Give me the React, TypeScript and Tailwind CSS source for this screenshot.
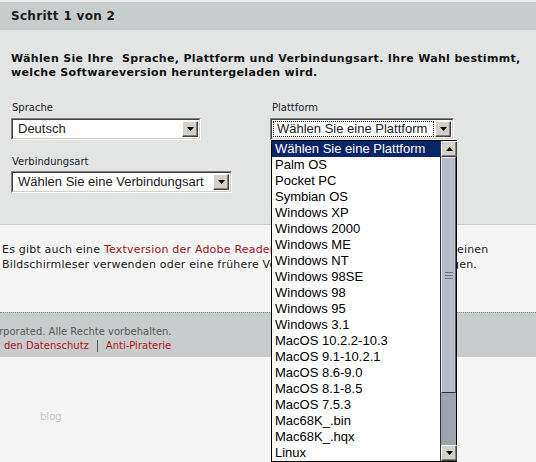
import type { ReactNode } from "react";

const platforms = [
  "Wählen Sie eine Plattform",
  "Palm OS",
  "Pocket PC",
  "Symbian OS",
  "Windows XP",
  "Windows 2000",
  "Windows ME",
  "Windows NT",
  "Windows 98SE",
  "Windows 98",
  "Windows 95",
  "Windows 3.1",
  "MacOS 10.2.2-10.3",
  "MacOS 9.1-10.2.1",
  "MacOS 8.6-9.0",
  "MacOS 8.1-8.5",
  "MacOS 7.5.3",
  "Mac68K_.bin",
  "Mac68K_.hqx",
  "Linux",
];

function Triangle({ up }: { up?: boolean }) {
  return (
    <svg width="7" height="4" viewBox="0 0 7 4">
      <path d={up ? "M3.5 0L7 4H0z" : "M0 0h7L3.5 4z"} fill="#000" />
    </svg>
  );
}

function ArrowButton({ up, className = "" }: { up?: boolean; className?: string }) {
  return (
    <div
      className={`flex h-[16px] w-[16px] shrink-0 items-center justify-center border border-t-white border-l-white border-r-[#404040] border-b-[#404040] bg-[#d4d0c8] shadow-[inset_-1px_-1px_0_#808080] ${className}`}
    >
      <Triangle up={up} />
    </div>
  );
}

function Select({ value, className, focused, children }: { value: string; className: string; focused?: boolean; children?: ReactNode }) {
  return (
    <div className={`relative h-[22px] border border-t-[#808080] border-l-[#808080] border-r-white border-b-white ${className}`}>
      <div className="flex h-full w-full items-center border border-t-[#404040] border-l-[#404040] border-r-[#d4d0c8] border-b-[#d4d0c8] bg-white pl-[1px] pr-[1px]">
        <div className={`flex h-[16px] flex-1 items-center whitespace-nowrap pl-[3px] ${focused ? "border border-dotted border-black" : "border border-transparent"}`}>
          {value}
        </div>
        <ArrowButton className="ml-[1px]" />
      </div>
      {children}
    </div>
  );
}

function PlatformList() {
  return (
    <div className="absolute left-[0px] top-[21px] z-10 flex w-[186px] border border-black bg-white">
      <ul className="flex-1">
        {platforms.map((p, i) => (
          <li
            key={p}
            className={`h-[16px] whitespace-nowrap pl-[3px] leading-[16px] ${i === 0 ? "bg-[#0a246a] text-white" : "text-black"}`}
          >
            {p}
          </li>
        ))}
      </ul>
      <div className="flex w-[16px] flex-col border-l border-[#303030]">
        <ArrowButton up className="bg-[#cdd0d8]" />
        <div className="flex h-[236px] items-center justify-center border border-t-[#e4e6ec] border-l-[#e4e6ec] border-r-[#5a5e66] border-b-[#303030] bg-[#b7bcc7] bg-[radial-gradient(circle,#abb0bb_0.7px,transparent_0.7px)] bg-[length:4px_4px]">
          <div className="flex flex-col gap-[2px]">
            <span className="h-[1px] w-[8px] bg-[#6f7580]" />
            <span className="h-[1px] w-[8px] bg-[#6f7580]" />
            <span className="h-[1px] w-[8px] bg-[#6f7580]" />
          </div>
        </div>
        <div className="h-[52px] bg-[#9da2ac]" />
        <ArrowButton className="bg-[#cdd0d8]" />
      </div>
    </div>
  );
}

export default function App() {
  return (
    <div className="relative h-[462px] w-[536px] overflow-hidden bg-[#f5f5f5] font-['DejaVu_Sans',Verdana,sans-serif] text-[#222]">
      <div className="h-[2px] bg-[#ececec]" />
      <div className="flex h-[28px] items-center bg-[#c9cccc] bg-[radial-gradient(circle,#c0c3c3_0.7px,transparent_0.7px)] bg-[length:4px_4px] px-[11px] text-[12px] font-bold tracking-[0.3px] text-[#1a1a1a]">
        Schritt 1 von 2
      </div>

      <div className="h-[195px] border-b border-[#cfd1d1] bg-[#e3e5e5] bg-[radial-gradient(circle,#dcdede_0.7px,transparent_0.7px)] bg-[length:4px_4px] px-[11px] pt-[22px]">
        <p className="text-[11px] font-bold leading-[14px] tracking-[0.33px] text-[#111]">
          Wählen Sie Ihre{"\u00a0"} Sprache, Plattform und Verbindungsart. Ihre Wahl bestimmt, welche Softwareversion heruntergeladen wird.
        </p>

        <div className="mt-[21px] grid grid-cols-[259px_1fr] font-['Liberation_Sans',Arial,sans-serif] text-[13px]">
          <div className="flex flex-col">
            <label className="mb-[4px] pl-[1px] font-['DejaVu_Sans',Verdana,sans-serif] text-[10px] leading-[13px]">Sprache</label>
            <Select value="Deutsch" className="w-[190px]" />
            <label className="mb-[3px] mt-[15px] pl-[1px] font-['DejaVu_Sans',Verdana,sans-serif] text-[10px] leading-[13px]">Verbindungsart</label>
            <Select value="Wählen Sie eine Verbindungsart" className="w-[221px]" />
          </div>
          <div className="flex flex-col">
            <label className="mb-[4px] pl-[2px] font-['DejaVu_Sans',Verdana,sans-serif] text-[10px] leading-[13px]">Plattform</label>
            <Select value="Wählen Sie eine Plattform" className="w-[184px]" focused>
              <PlatformList />
            </Select>
          </div>
        </div>
      </div>

      <div className="h-[87px] pl-[2px] pr-[20px] pt-[17px] text-[11px] leading-[15px] tracking-[0.2px]">
        <p>
          Es gibt auch eine <a className="text-[#a3121c]">Textversion der Adobe Reader-Download-Seite</a> für Nutzer, die einen Bildschirmleser verwenden oder eine frühere Version von Adobe Reader benötigen.
        </p>
      </div>

      <div className="h-[45px] border-t border-dotted border-[#8a8a8a] bg-[#c9cccc] bg-[radial-gradient(circle,#c0c3c3_0.7px,transparent_0.7px)] bg-[length:4px_4px] pt-[12px] text-[10px] leading-[14px]">
        <p className="flex whitespace-nowrap text-[#5a5a5a]">
          <span className="flex w-0 justify-end">Copyright © 2004 Adobe Systems Inco</span>
          <span className="-ml-[1px]">rporated. Alle Rechte vorbehalten.</span>
        </p>
        <p className="flex items-center whitespace-nowrap">
          <span className="flex w-0 justify-end text-[#b0141e]">Nutzungsbedingungen | Online-Richtlinien für</span>
          <a className="ml-[4px] text-[#b0141e]">den Datenschutz</a>
          <span className="mx-[8px] h-[12px] border-l border-[#555]" />
          <a className="text-[#b0141e]">Anti-Piraterie</a>
        </p>
      </div>

      <p className="ml-[40px] mt-[52px] text-[10px] text-[#c8c8c8]">blog</p>
    </div>
  );
}
